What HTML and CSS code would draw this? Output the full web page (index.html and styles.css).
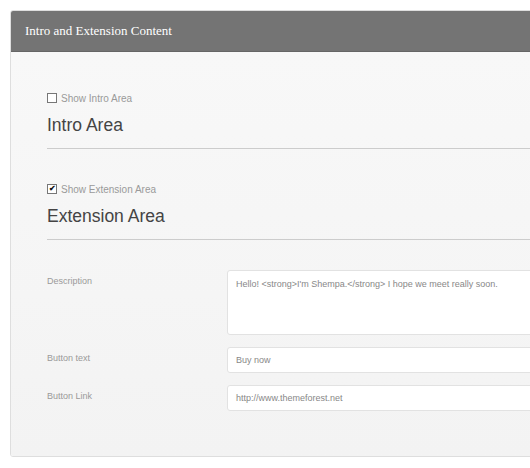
FILE: index.html
```html
<!DOCTYPE html>
<html lang="en">
<head>
    <meta charset="UTF-8">
    <title>Intro and Extension Content</title>
    <link rel="stylesheet" href="styles.css">
</head>
<body>

    <div class="panel">
        <div class="panel-head">Intro and Extension Content</div>

        <div class="panel-body">
            <div class="section">
                <label class="toggle"><span class="box"></span>Show Intro Area</label>
                <h2>Intro Area</h2>
            </div>

            <div class="section">
                <label class="toggle"><span class="box checked">&#10004;</span>Show Extension Area</label>
                <h2>Extension Area</h2>
            </div>

            <div class="field">
                <div class="field-label">Description</div>
                <div class="input area">Hello! &lt;strong&gt;I'm Shempa.&lt;/strong&gt; I hope we meet really soon.</div>
            </div>
            <div class="field">
                <div class="field-label">Button text</div>
                <div class="input">Buy now</div>
            </div>
            <div class="field">
                <div class="field-label">Button Link</div>
                <div class="input">http://www.themeforest.net</div>
            </div>
        </div>
    </div>

</body>
</html>
```

FILE: styles.css
```css
html, body {
    margin: 0;
    background: #ffffff;
    overflow: hidden;
}

body {
    padding: 10px 0 0 10px;
    font-family: "Liberation Sans", Arial, sans-serif;
}

.panel {
    width: 620px;
    border: 1px solid #dedede;
    border-radius: 3px;
    overflow: hidden;
}

.panel-head {
    height: 40px;
    line-height: 40px;
    padding-left: 14px;
    background: #747474;
    border-bottom: 1px solid #666666;
    color: #ffffff;
    font-family: "Liberation Serif", Georgia, serif;
    font-size: 13px;
}

.panel-body {
    background: linear-gradient(to bottom, #f8f8f8, #f3f3f3);
    padding: 39px 0 33px 36px;
}

.section {
    border-bottom: 1px solid #cccccc;
    margin-bottom: 33px;
    padding-bottom: 12px;
}

.section:nth-child(2) {
    margin-bottom: 30px;
}

.toggle {
    display: flex;
    align-items: center;
    font-size: 10px;
    color: #9a9a9a;
    height: 14px;
}

.box {
    width: 8px;
    height: 8px;
    border: 1px solid #777777;
    background: #ffffff;
    margin-right: 4px;
    font-size: 8px;
    font-weight: bold;
    line-height: 8px;
    text-align: center;
    color: #111111;
}

h2 {
    margin: 10px 0 0;
    font-size: 17.5px;
    font-weight: normal;
    color: #444444;
}

.field {
    display: flex;
    margin-bottom: 12px;
}

.field-label {
    width: 180px;
    padding-top: 6px;
    font-size: 9px;
    color: #9a9a9a;
}

.input {
    flex: 1;
    height: 24px;
    line-height: 24px;
    padding: 0 8px;
    background: #ffffff;
    border: 1px solid #e2e2e2;
    border-radius: 3px;
    font-size: 9px;
    color: #888888;
}

.input.area {
    height: 56px;
    line-height: 12px;
    padding-top: 7px;
}
```
